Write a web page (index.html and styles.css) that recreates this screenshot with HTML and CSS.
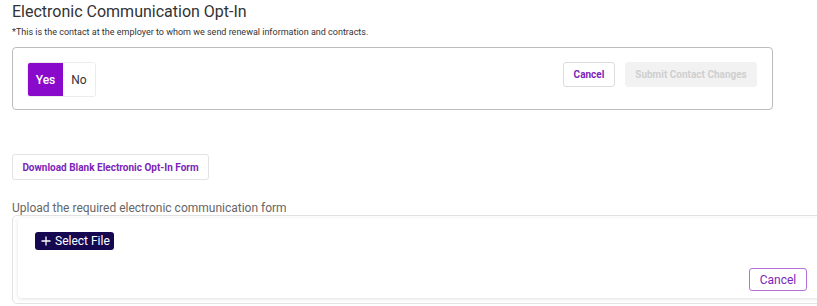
FILE: index.html
```html
<!DOCTYPE html>
<html lang="en">
<head>
<meta charset="utf-8">
<title>Electronic Communication Opt-In</title>
<link rel="stylesheet" href="styles.css">
</head>
<body>
<div class="page">
  <h1 class="title">Electronic Communication Opt-In</h1>
  <p class="note">*This is the contact at the employer to whom we send renewal information and contracts.</p>
  <div class="optin-box">
    <div class="toggle">
      <button class="toggle-btn active">Yes</button>
      <button class="toggle-btn">No</button>
    </div>
    <div class="actions">
      <button class="btn btn-outline">Cancel</button>
      <button class="btn btn-disabled">Submit Contact Changes</button>
    </div>
  </div>
  <button class="btn btn-download">Download Blank Electronic Opt-In Form</button>
  <div class="upload-label">Upload the required electronic communication form</div>
  <div class="upload-box">
    <div class="upload-card">
      <div class="upload-top">
        <button class="btn-select"><svg class="plus" viewBox="0 0 10 10" width="10" height="10"><path d="M5 0.5V9.5M0.5 5H9.5" stroke="#fff" stroke-width="1.3" fill="none"/></svg>Select File</button>
      </div>
      <div class="upload-bottom">
        <button class="btn-cancel2">Cancel</button>
      </div>
    </div>
  </div>
</div>
</body>
</html>
```

FILE: styles.css
```css
* { box-sizing: border-box; }
html, body { margin: 0; padding: 0; background: #fff; }
body {
  font-family: Roboto, "Liberation Sans", Arial, sans-serif;
  color: #333;
  overflow: hidden;
}
.page {
  padding: 2px 0 0 12px;
  width: 817px;
}
.title {
  margin: 0;
  font-size: 16px;
  font-weight: 400;
  line-height: 20px;
  color: #333;
}
.note {
  margin: 4px 0 0 0;
  font-size: 9px;
  line-height: 12px;
  color: #333;
}
.optin-box {
  margin-top: 9px;
  width: 761px;
  height: 63px;
  border: 1px solid #bdbdbd;
  border-radius: 4px;
  display: flex;
  justify-content: space-between;
  align-items: flex-start;
  padding: 14px 15px 0 14px;
}
.toggle {
  display: flex;
  border: 1px solid #ececec;
  border-radius: 3px;
  overflow: hidden;
  height: 35px;
}
.toggle-btn {
  border: none;
  background: #fff;
  font-family: inherit;
  font-size: 12px;
  color: #333;
  padding: 0;
  height: 33px;
  width: 32px;
  cursor: pointer;
}
.toggle-btn.active {
  background: #8a0acb;
  color: #fff;
  font-weight: 500;
  width: 35px;
}
.actions {
  display: flex;
  gap: 10px;
}
.btn {
  font-family: inherit;
  font-size: 10px;
  font-weight: 700;
  border-radius: 3px;
  cursor: pointer;
  padding: 0;
}
.btn-outline {
  height: 25px;
  width: 52px;
  background: #fff;
  border: 1px solid #dcdcdc;
  color: #7b25b8;
}
.btn-disabled {
  height: 25px;
  width: 132px;
  background: #f2f2f2;
  border: 1px solid #f2f2f2;
  color: #cfcfcf;
}
.btn-download {
  display: block;
  margin-top: 44px;
  height: 26px;
  width: 197px;
  background: #fff;
  border: 1px solid #e3e3e3;
  color: #7b25b8;
}
.upload-label {
  margin-top: 21px;
  font-size: 12px;
  line-height: 14px;
  color: #666;
}
.upload-box {
  margin-top: 0;
  width: 820px;
  height: 89px;
  border: 1px solid #e2e2e2;
  border-radius: 5px;
  padding: 2px 6px 4px 5px;
}
.upload-card {
  height: 80px;
  border-radius: 4px;
  background: #fff;
  box-shadow: 0 1px 4px rgba(0,0,0,0.12);
  display: flex;
  flex-direction: column;
  justify-content: space-between;
  padding: 14px 0 7px 17px;
}
.upload-top { display: flex; }
.btn-select {
  display: flex;
  align-items: center;
  gap: 4px;
  height: 18px;
  padding: 0 4px 0 6px;
  background: #150850;
  color: #fff;
  border: none;
  border-radius: 3px;
  font-family: inherit;
  font-size: 12px;
  font-weight: 400;
  cursor: pointer;
}
.plus { display: block; }
.upload-bottom {
  display: flex;
  justify-content: flex-end;
  padding-right: 18px;
}
.btn-cancel2 {
  height: 23px;
  width: 58px;
  background: #fff;
  border: 1.5px solid #b56fd8;
  border-radius: 3px;
  color: #7b25b8;
  font-family: inherit;
  font-size: 12px;
  padding: 0;
  cursor: pointer;
}
```
